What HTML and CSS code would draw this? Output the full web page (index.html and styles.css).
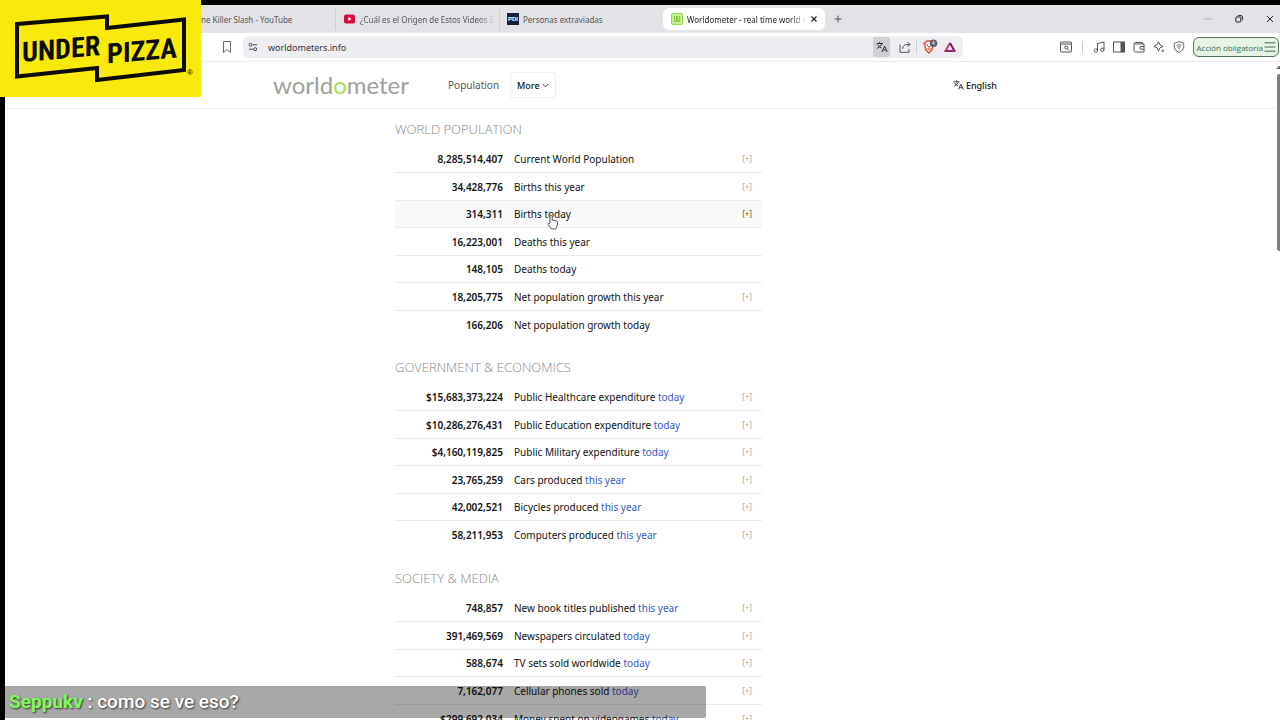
FILE: index.html
```html
<!DOCTYPE html>
<html lang="es">
<head>
<meta charset="utf-8">
<meta name="viewport" content="width=device-width, initial-scale=1">
<title>Worldometer - real time world statistics</title>
<link rel="stylesheet" href="styles.css">
</head>
<body>
<div class="screen">
  <div class="browser">
    <div class="tabs">
      <button class="tab tab-first"><span class="tab-text">ne Killer Slash - YouTube</span></button>
      <button class="tab tab-second">
        <svg class="fav" viewBox="0 0 12 12"><rect x="0" y="1.500" width="11" height="9" rx="2" fill="#d9083c"/><path d="M4.300 4v4l3.400-2z" fill="#fff"/></svg>
        <span class="tab-text fade">¿Cuál es el Origen de Estos Videos E</span>
      </button>
      <button class="tab tab-third">
        <span class="fav pdi">PDI</span>
        <span class="tab-text">Personas extraviadas</span>
      </button>
      <button class="tab tab-active">
        <svg class="fav" viewBox="0 0 12 12"><rect x=".5" y=".5" width="11" height="11" rx="1.500" fill="#c9ee97" stroke="#8fdc45"/><path d="M3.500 3v5.500H5.500V3M6.800 3v5.500H8.700V3" fill="none" stroke="#78ca2b"/></svg>
        <span class="tab-text fade">Worldometer - real time world s</span>
        <svg class="close" viewBox="0 0 8 8"><path d="M1.500 1.500l5 5M6.500 1.500l-5 5" stroke="#222" stroke-width="1.200"/></svg>
      </button>
      <button class="new-tab" aria-label="Nueva pestaña"><svg width="8" height="8" viewBox="0 0 8 8"><path d="M4 .5v7M.5 4h7" stroke="#555"/></svg></button>
      <div class="window-buttons">
        <button aria-label="Minimizar"><svg width="8" height="8" viewBox="0 0 8 8"><path d="M.5 4h7" stroke="#aaa"/></svg></button>
        <button aria-label="Restaurar"><svg width="8" height="8" viewBox="0 0 8 8" fill="none" stroke="#222"><rect x=".8" y="2" width="5" height="5" rx="1"/><path d="M2.500 1Q3 .6 4 .6h2q1.400 0 1.400 1.400v2.500q0 .8-.5 1"/></svg></button>
        <button aria-label="Cerrar"><svg width="8" height="8" viewBox="0 0 8 8"><path d="M1 1l6 6M7 1L1 7" stroke="#222"/></svg></button>
      </div>
    </div>
    <div class="toolbar">
      <button class="icon" aria-label="Marcador"><svg width="10" height="14" viewBox="0 0 10 14"><path d="M1.500 1.500h7v11L5 9.500l-3.500 3z" fill="none" stroke="#666"/></svg></button>
      <div class="address">
        <svg width="10" height="10" viewBox="0 0 10 10" fill="none" stroke="#444"><circle cx="2.600" cy="2.800" r="1.500"/><path d="M5 2.800h4M1 7.200h4"/><circle cx="7.200" cy="7.200" r="1.500"/></svg>
        <input type="text" aria-label="Dirección" value="worldometers.info">
        <button class="translate" aria-label="Traducir"><svg width="12" height="12" viewBox="0 0 12 12"><use href="#lang"/></svg></button>
        <button class="icon" aria-label="Compartir"><svg width="12" height="12" viewBox="0 0 12 12" fill="none" stroke="#555"><path d="M1 3.500v7.800h9V8M3.500 8Q4 3.500 8 3.500h3M8.500 1L11 3.500 8.500 6"/></svg></button>
        <span class="divider"></span>
        <button class="icon shield" aria-label="Escudo"><svg width="16" height="16" viewBox="0 0 16 16"><path d="M3 3.500L5 2h4l2 1.500 1 1.500-1 1-.8 4.500L7 14 3.800 11 3 6 2 5z" fill="#fff" stroke="#d9502f" stroke-width="1.500"/><path d="M4.500 5l2 3M9.500 5l-2 3M5 9.500l2 1.500 2-1.500M7 7v3" stroke="#e5502c" fill="none"/><circle cx="11.500" cy="4.200" r="3.800" fill="#596170"/><text x="10" y="6" class="badge">4</text></svg></button>
        <button class="icon" aria-label="Recompensas"><svg width="12" height="12" viewBox="0 0 12 12" fill="none" stroke-width="2"><path d="M6 2L1.500 10" stroke="#e5384c"/><path d="M6 2l4.500 8" stroke="#64206f"/><path d="M.5 10h11" stroke="#a02468"/></svg></button>
      </div>
      <div class="tools">
        <button class="icon" aria-label="Buscar"><svg width="12" height="12" viewBox="0 0 12 12" fill="none" stroke="#555"><rect x=".5" y="1" width="11" height="10" rx="1"/><path d="M1 3h10M7.500 8l1.500 1.500"/><circle cx="6.300" cy="6.500" r="1.500"/></svg></button>
        <span class="divider"></span>
        <button class="icon" aria-label="Música"><svg width="12" height="12" viewBox="0 0 12 12" fill="none" stroke="#555"><path d="M4.500 9.500V2.500L11 1v7.500"/><circle cx="2.800" cy="9.600" r="1.700"/><circle cx="9.300" cy="8.800" r="1.700"/></svg></button>
        <button class="icon" aria-label="Panel"><svg width="12" height="12" viewBox="0 0 12 12"><rect x=".5" y="1" width="11" height="10" fill="none" stroke="#555"/><path d="M7.500 1h4v10h-4z" fill="#555"/></svg></button>
        <button class="icon" aria-label="Cartera"><svg width="12" height="12" viewBox="0 0 12 12" fill="none" stroke="#555"><path d="M9.500 3V1.500h-7Q1 1.500 1 3v6.500Q1 11 2.500 11H11V3H2M11 5.500H8q-1.300 0-1.300 1.300T8 8.200h3"/></svg></button>
        <button class="icon" aria-label="Leo"><svg width="12" height="12" viewBox="0 0 12 12" fill="none" stroke="#555"><path d="M5.500 .8l1.400 3L10 5.500 6.900 6.900 5.500 10 4.100 6.900.9 5.500l3.200-1.700z"/><path d="M9.800 8.500v2.500M8.500 9.800h2.500"/></svg></button>
        <button class="icon" aria-label="VPN"><svg width="12" height="12" viewBox="0 0 12 12" fill="none" stroke="#666"><path d="M6 .7l4.700 1.500v4Q10.700 9.300 6 11.500 1.300 9.300 1.300 6.200v-4zM3.500 4.300q2.500-1.300 5 0M4.300 6.200q1.700-1 3.400 0M6 7.200v1"/></svg></button>
        <button class="update">Acción obligatoria <svg width="12" height="10" viewBox="0 0 12 10"><path d="M.5 .8h11M.5 5h11M.5 9.200h11" stroke="#456a4a"/></svg></button>
      </div>
    </div>
    <header class="site-header">
      <a class="logo" href="#">world<span class="logo-o">o</span>meter</a>
      <nav class="nav"><a href="#">Population</a><button class="more">More <svg width="7" height="5" viewBox="0 0 7 5"><path d="M.5 .8l3 3 3-3" fill="none" stroke="#333"/></svg></button></nav>
      <button class="language"><svg width="11" height="12" viewBox="0 0 12 12"><g id="lang" fill="none" stroke="#333"><path d="M.5 2.500h6.500M3.700 .8v1.700M6 2.500Q5 5.500 1 7.500M1.800 3.500Q3 6 5.500 7.200"/><path d="M6 11l2.600-6 2.600 6M6.900 9h3.400"/></g></svg>English</button>
    </header>
    <main class="page">
      <section>
        <h2>WORLD POPULATION</h2>
        <table>
          <tr><td class="num">8,285,514,407</td><td class="label">Current World Population</td><td class="plus">[+]</td></tr>
          <tr><td class="num">34,428,776</td><td class="label">Births this year</td><td class="plus">[+]</td></tr>
          <tr class="hovered"><td class="num">314,311</td><td class="label">Births today</td><td class="plus">[+]</td></tr>
          <tr><td class="num">16,223,001</td><td class="label">Deaths this year</td><td class="plus"></td></tr>
          <tr><td class="num">148,105</td><td class="label">Deaths today</td><td class="plus"></td></tr>
          <tr><td class="num">18,205,775</td><td class="label">Net population growth this year</td><td class="plus">[+]</td></tr>
          <tr><td class="num">166,206</td><td class="label">Net population growth today</td><td class="plus"></td></tr>
        </table>
      </section>
      <section>
        <h2>GOVERNMENT &amp; ECONOMICS</h2>
        <table>
          <tr><td class="num">$15,683,373,224</td><td class="label">Public Healthcare expenditure <span>today</span></td><td class="plus">[+]</td></tr>
          <tr><td class="num">$10,286,276,431</td><td class="label">Public Education expenditure <span>today</span></td><td class="plus">[+]</td></tr>
          <tr><td class="num">$4,160,119,825</td><td class="label">Public Military expenditure <span>today</span></td><td class="plus">[+]</td></tr>
          <tr><td class="num">23,765,259</td><td class="label">Cars produced <span>this year</span></td><td class="plus">[+]</td></tr>
          <tr><td class="num">42,002,521</td><td class="label">Bicycles produced <span>this year</span></td><td class="plus">[+]</td></tr>
          <tr><td class="num">58,211,953</td><td class="label">Computers produced <span>this year</span></td><td class="plus">[+]</td></tr>
        </table>
      </section>
      <section>
        <h2>SOCIETY &amp; MEDIA</h2>
        <table>
          <tr><td class="num">748,857</td><td class="label">New book titles published <span>this year</span></td><td class="plus">[+]</td></tr>
          <tr><td class="num">391,469,569</td><td class="label">Newspapers circulated <span>today</span></td><td class="plus">[+]</td></tr>
          <tr><td class="num">588,674</td><td class="label">TV sets sold worldwide <span>today</span></td><td class="plus">[+]</td></tr>
          <tr><td class="num">7,162,077</td><td class="label">Cellular phones sold <span>today</span></td><td class="plus">[+]</td></tr>
          <tr><td class="num">$299,692,034</td><td class="label">Money spent on videogames <span>today</span></td><td class="plus">[+]</td></tr>
        </table>
      </section>
    </main>
  </div>
  <svg class="brand" viewBox="0 0 201 97" role="img" aria-label="Under Pizza">
    <rect width="201" height="97" fill="#f9ea0b"/>
    <path d="M17 24L107 16.500V28L184 19.500V70L97 80V68L17 76.500z" fill="none" stroke="#0c0c04" stroke-width="4"/>
    <g transform="skewY(-5)"><text class="brand-text" x="22" y="64">UNDER</text><text class="brand-text" x="107" y="73">PIZZA</text></g>
    <text class="brand-mark" x="187" y="75">®</text>
  </svg>
  <svg class="cursor" viewBox="0 0 12 16"><path d="M3 9V2.500Q3 1 4 1t1.200 1.500V6l4 .8q1.600.4 1.500 2L10 12l-1.200 3H4.500L1.200 10.500Q1 8.500 3 9.800" fill="#fff" stroke="#555"/></svg>
  <div class="scrollbar"></div>
  <svg class="scroll-arrow" viewBox="0 0 4 4"><path d="M0 3l3-3h1v3z" fill="#666"/></svg>
  <div class="chat"><b>Seppukv</b> : como se ve eso?</div>
</div>
</body>
</html>
```

FILE: styles.css
```css
* { box-sizing: border-box; }
body { margin: 0; background: #000; font-family: "Noto Sans", sans-serif; color: #111; }
button, input { font: inherit; color: inherit; border: 0; padding: 0; background: none; }
a { color: inherit; text-decoration: none; }
svg { display: block; flex: none; }
.screen { position: relative; height: 100vh; overflow: hidden; padding: 5px 0 0 5px; }
.browser { background: #fff; height: 100%; overflow: hidden; }

.tabs { display: flex; align-items: center; height: 28px; background: #e3e2e7; font: 8px "Noto Sans", sans-serif; color: #555; }
.tab { display: flex; align-items: center; gap: 4px; height: 22px; text-align: left; }
.tab-text { overflow: hidden; white-space: nowrap; }
.fade { flex: 1; mask-image: linear-gradient(90deg, #000 88%, transparent); }
.fav { width: 12px; height: 12px; flex: none; }
.tab-first { width: 330px; padding-left: 196px; }
.tab-second { width: 164px; padding: 0 4px 0 8px; border-left: 1px solid #cfced4; }
.tab-third { width: 164px; padding-left: 7px; border-left: 1px solid #cfced4; }
.pdi { background: #17213b; color: #fff; font: bold 6px/12px "Liberation Sans", sans-serif; text-align: center; }
.tab-active { width: 162px; padding: 0 7px 0 8px; background: #fff; border-radius: 6px; color: #222; }
.close { width: 8px; height: 8px; }
.new-tab { margin-left: 9px; }
.window-buttons { display: flex; gap: 23px; margin-left: auto; padding-right: 6px; }

.toolbar { display: flex; align-items: center; height: 29px; padding: 0 1px 0 217px; border-bottom: 1px solid #e9e9ed; }
.address { display: flex; flex: 0 1 720px; align-items: center; height: 22px; margin-left: 11px; padding: 0 7px 0 5px; border-radius: 6px; background: #eeedf2; font-size: 9px; }
.address input { flex: 1; min-width: 0; margin-left: 10px; color: #333; outline: 0; }
.translate { display: grid; place-items: center; width: 17px; height: 20px; margin-right: 9px; background: #d0d0d4; border-radius: 2px; }
.divider { width: 1px; height: 12px; margin: 0 5px; background: #ccc; }
.shield { margin-right: 6px; }
.badge { font: 5px "Liberation Sans", sans-serif; fill: #fff; }
.tools { display: flex; align-items: center; gap: 8px; margin-left: auto; }
.tools .divider { margin: 0 2px; }
.update { display: flex; align-items: center; gap: 1px; height: 20px; padding: 0 2px 0 3px; border: 1px solid #547458; border-radius: 6px; background: #e6f3e5; color: #456a4a; font: 8px "Open Sans", sans-serif; white-space: nowrap; }

.site-header { display: flex; align-items: center; height: 47px; padding: 0 283px 0 268px; border-bottom: 1px solid #f0f0f0; font-size: 10px; }
.logo { color: #a0a09b; font: 400 24px/32px Lato, sans-serif; }
.logo-o { color: #a4df51; }
.nav { display: flex; align-items: center; gap: 11px; margin-left: 39px; color: #555; }
.more { display: flex; align-items: center; gap: 2px; height: 26px; padding: 0 6px; border: 1px solid #eee; border-radius: 2px; color: #111; font-size: 9px; font-weight: 500; }
.language { display: flex; align-items: center; gap: 2px; margin-left: auto; font-size: 9px; font-weight: 500; }

.page { width: 367px; margin: 0 auto 0 390px; padding-top: 10px; }
h2 { margin: 0; font: 300 13px/20px "Open Sans", sans-serif; color: #888; }
section { margin-bottom: 19px; }
table { width: 100%; margin-top: 7px; border-collapse: separate; border-spacing: 0; font-size: 10px; }
tr { height: 27px; }
tr:nth-child(even) { height: 28px; }
td { padding: 0; line-height: 18px; border-bottom: 1px solid #eaeaea; }
tr:last-child td { border-bottom: 0; }
.num { width: 108px; text-align: right; font-weight: 600; }
.label { padding-left: 11px; }
.label span { color: #3459c4; }
.plus { width: 36px; padding-right: 10px; text-align: right; color: #aaa; font-size: 8px; }
.hovered { background: #f9f9f9; }
.hovered .plus { color: #476b38; }

.brand { position: absolute; left: 0; top: 0; width: 201px; height: 97px; }
.brand-text { font: bold 28px "Roboto Condensed", "Liberation Sans", sans-serif; fill: #0c0c04; }
.brand-mark { font: 8px "Liberation Sans", sans-serif; }
.cursor { position: absolute; left: 547px; top: 214px; width: 12px; height: 16px; }
.scrollbar { position: absolute; right: 0; top: 74px; width: 3px; height: 177px; border-radius: 2px 0 0 2px; background: #808080; }
.scroll-arrow { position: absolute; right: 0; top: 66px; width: 4px; height: 4px; }
.chat { position: absolute; left: 5px; bottom: 2px; width: 701px; height: 32px; padding-left: 4px; border-radius: 0 2px 2px 0; background: rgba(0, 0, 0, .34); color: #fff; font: 500 19px/32px Roboto, sans-serif; text-shadow: 1px 1px 2px #333; }
.chat b { color: #7dfc58; font-weight: 700; }
```
